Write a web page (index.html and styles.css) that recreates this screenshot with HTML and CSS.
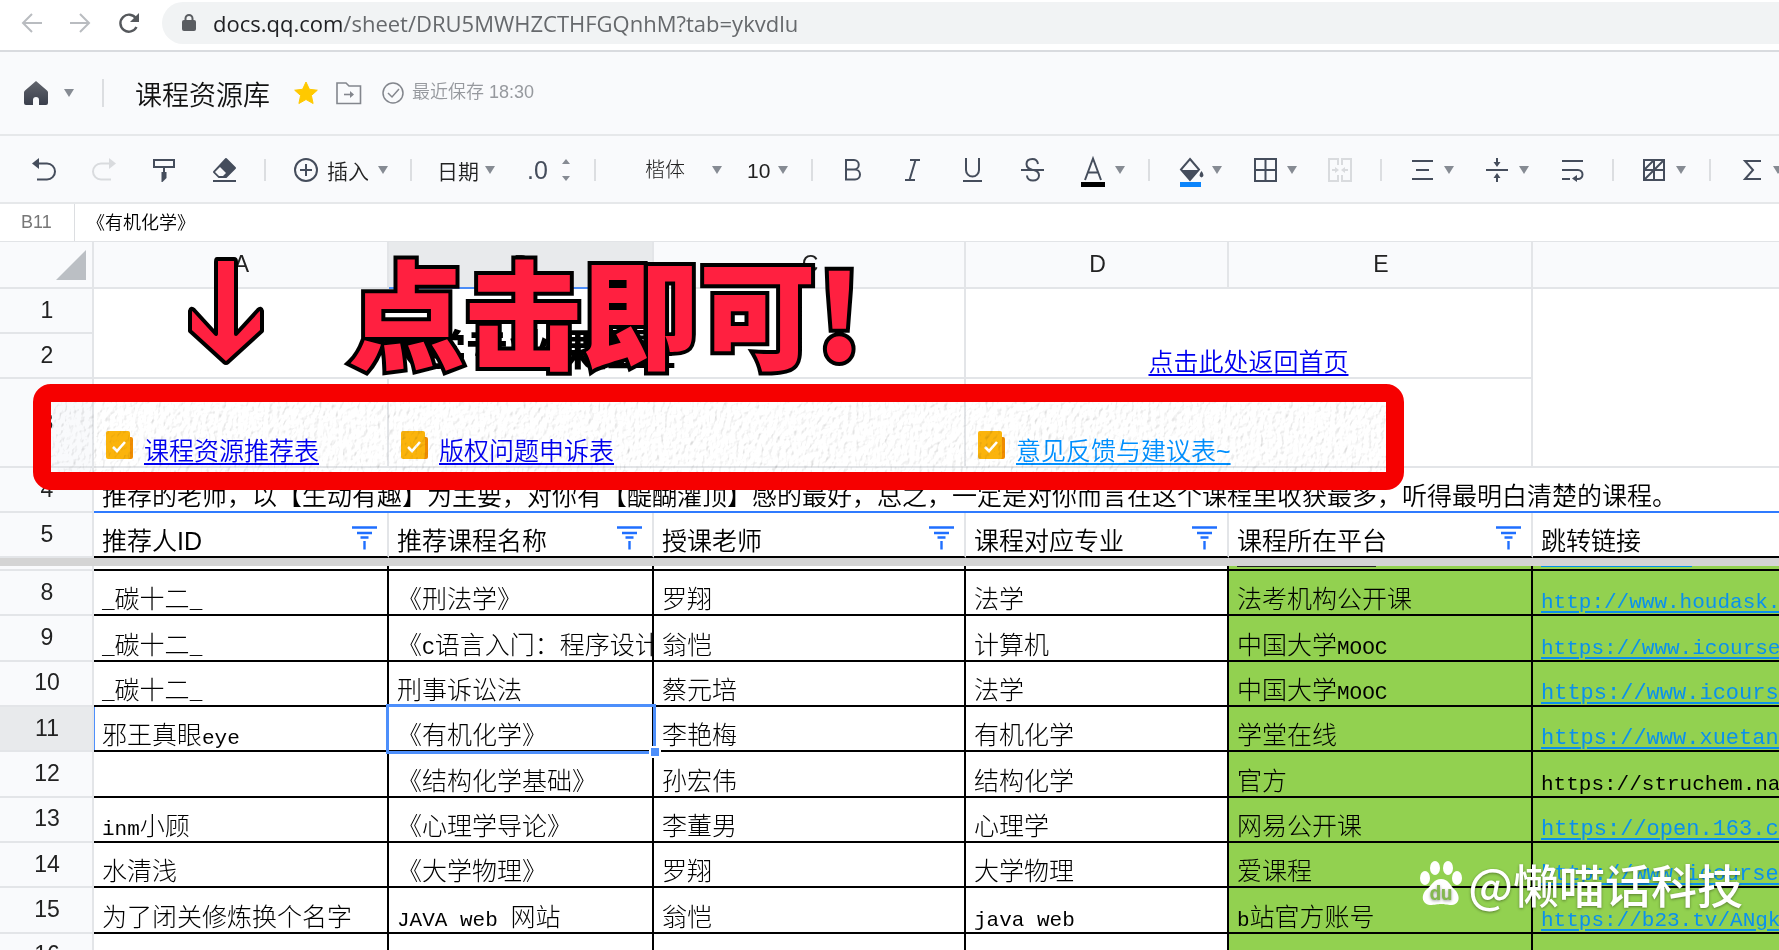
FILE: index.html
```html
<!DOCTYPE html>
<html lang="zh-CN">
<head>
<meta charset="utf-8">
<title>课程资源库</title>
<link rel="stylesheet" href="styles.css">
</head>
<body>
<svg class="defs" aria-hidden="true">
  <symbol id="caret" viewBox="0 0 10 8"><path d="M0 0h10L5 8z" fill="#868b93"/></symbol>
  <symbol id="filter" viewBox="0 0 26 24"><path d="M0 1.500h25M5 7h15M8.500 11.500h8M12.500 15v8.500" fill="none" stroke="#1f6fff" stroke-width="2.400"/></symbol>
  <symbol id="form" viewBox="0 0 27 29"><rect x="14" y="6" width="13" height="22" rx="2" fill="#f08c00"/><rect width="24" height="28" rx="2" fill="#fbb40c"/><path d="M7 16l4 4 8-9" fill="none" stroke="#fff" stroke-width="2.600"/></symbol>
</svg>

<header class="browser">
  <button class="nav" aria-label="后退"><svg width="20" height="20" viewBox="0 0 20 20"><path d="M20 10H2M10 1l-9 9 9 9" fill="none" stroke="#b9bcc0" stroke-width="2"/></svg></button>
  <button class="nav" aria-label="前进"><svg width="20" height="20" viewBox="0 0 20 20"><path d="M0 10h18M10 1l9 9-9 9" fill="none" stroke="#b9bcc0" stroke-width="2"/></svg></button>
  <button class="nav" aria-label="刷新"><svg width="22" height="20" viewBox="0 0 22 20"><path d="M18 5.500A8.500 8.500 0 1 0 18.500 14" fill="none" stroke="#55585c" stroke-width="2.400"/><path d="M21 0v9h-9z" fill="#55585c"/></svg></button>
  <div class="address">
    <svg width="14" height="18" viewBox="0 0 14 18"><rect y="6" width="14" height="11" rx="2" fill="#5a5d61"/><path d="M3.500 7V4.500a3.500 3.500 0 0 1 7 0V7" fill="none" stroke="#5a5d61" stroke-width="2"/></svg>
    <span class="url"><span class="host">docs.qq.com</span>/sheet/DRU5MWHZCTHFGQnhM?tab=ykvdlu</span>
  </div>
</header>

<div class="titlebar">
  <button class="home" aria-label="首页"><svg width="24" height="26" viewBox="0 0 24 26"><defs><linearGradient id="hg" x2="0" y2="1"><stop stop-color="#62656d"/><stop offset="1" stop-color="#3a3f4c"/></linearGradient></defs><path d="M12 1l11 9.500q1 1 1 2V23q0 2-2 2h-7v-5a3 3 0 0 0-6 0v5H2q-2 0-2-2V12.500q0-1 1-2z" fill="url(#hg)"/></svg><svg class="caret"><use href="#caret"/></svg></button>
  <i class="sep tall"></i>
  <h1>课程资源库</h1>
  <button aria-label="收藏"><svg width="24" height="24" viewBox="0 0 24 24"><path d="M12 1l3.400 7.300 7.900.9-5.900 5.300 1.700 8L12 18.500l-7.100 4 1.700-8L.7 9.200l7.900-.9z" fill="#ffc900" stroke="#ffc900" stroke-linejoin="round"/></svg></button>
  <button class="folder" aria-label="移动"><svg width="26" height="24" viewBox="0 0 26 24" fill="none" stroke="#83868d" stroke-width="1.600"><path d="M1 2h9l3 3h11.500v17.500H1z"/><path d="M8 13.500h8"/><path d="M14 10l4 3.500-4 3.500z" fill="#83868d" stroke="none"/></svg></button>
  <div class="saved"><svg width="22" height="22" viewBox="0 0 22 22" fill="none" stroke="#83868d" stroke-width="1.500"><circle cx="11" cy="11" r="10"/><path d="M6 11l4 4 7-8"/></svg><span>最近保存 18:30</span></div>
</div>

<div class="toolbar">
  <button class="tool" aria-label="撤销"><svg width="24" height="24" viewBox="0 0 24 24" fill="none" stroke="#454d5c" stroke-width="2"><path d="M5 5.500h10a8 8 0 0 1 0 16H5"/><path d="M7 0v11L0 5.500z" fill="#454d5c" stroke="none"/></svg></button>
  <button class="tool" aria-label="重做"><svg width="24" height="24" viewBox="0 0 24 24" fill="none" stroke="#d9dbde" stroke-width="2"><path d="M19 5.500H9a8 8 0 0 0 0 16h10"/><path d="M17 0v11l7-5.500z" fill="#d9dbde" stroke="none"/></svg></button>
  <button class="tool" aria-label="格式刷"><svg width="24" height="24" viewBox="0 0 24 24" fill="none" stroke="#454d5c" stroke-width="2"><path d="M2 2h20v7H2zM12 9v6"/><path d="M9.500 14h5v6l-4 4h-1z" fill="#454d5c" stroke="none"/></svg></button>
  <button class="tool" aria-label="清除格式"><svg width="24" height="24" viewBox="0 0 24 24" fill="none" stroke="#454d5c" stroke-width="2"><path d="M14 1l9 9-9 9H7l-5-5z" fill="#454d5c" stroke-linejoin="round"/><path d="M8 9l6 6-3 3H7l-4-4z" fill="#f9fafc" stroke="none"/><path d="M1 23h23"/></svg></button>
  <i class="sep"></i>
  <button class="insert"><svg width="24" height="24" viewBox="0 0 24 24" fill="none" stroke="#454d5c" stroke-width="2"><circle cx="12" cy="12" r="11"/><path d="M12 6v12M6 12h12"/></svg><span>插入</span><svg class="caret"><use href="#caret"/></svg></button>
  <i class="sep"></i>
  <button class="date"><span>日期</span><svg class="caret"><use href="#caret"/></svg></button>
  <button class="decimal"><span>.0</span><svg width="8" height="22" viewBox="0 0 8 22" fill="#868b93"><path d="M4 0l4 5H0zM4 22l4-5H0z"/></svg></button>
  <i class="sep"></i>
  <label class="drop face"><select aria-label="字体"><option>楷体</option></select><svg class="caret"><use href="#caret"/></svg></label>
  <label class="drop size"><select aria-label="字号"><option>10</option></select><svg class="caret"><use href="#caret"/></svg></label>
  <i class="sep"></i>
  <button class="tool" aria-label="加粗"><svg width="24" height="24" viewBox="0 0 24 24" fill="none" stroke="#454d5c" stroke-width="2"><path d="M5 2h8a4.500 4.500 0 0 1 0 9.500H5zM5 11.500h9a5 5 0 0 1 0 10H5z"/></svg></button>
  <button class="tool" aria-label="斜体"><svg width="24" height="24" viewBox="0 0 24 24" fill="none" stroke="#454d5c" stroke-width="2"><path d="M9 2h10M4 22h10M14.500 2l-6 20"/></svg></button>
  <button class="tool" aria-label="下划线"><svg width="24" height="24" viewBox="0 0 24 24" fill="none" stroke="#454d5c" stroke-width="2"><path d="M5 0v12a6.500 6.500 0 0 0 13 0V0M2 23h19"/></svg></button>
  <button class="tool" aria-label="删除线"><svg width="24" height="24" viewBox="0 0 24 24" fill="none" stroke="#454d5c" stroke-width="2"><path d="M17 6c-.5-3-2.500-5-5.500-5-4 0-6 2-6 5 0 4 3 5 6 6M13 12c3 1 5 3 5 5.500 0 3-2.500 5-6 5s-6-2-6-5M0 12h23"/></svg></button>
  <button class="tool drop-tool" aria-label="文字颜色"><svg width="24" height="34" viewBox="0 0 24 34" fill="none" stroke="#454d5c" stroke-width="2"><path d="M4 27L12 5.500 20 27M7 19.500h10"/><path d="M0 31.500h24" stroke="#000" stroke-width="5"/></svg><svg class="caret"><use href="#caret"/></svg></button>
  <i class="sep"></i>
  <button class="tool drop-tool" aria-label="填充颜色"><svg width="24" height="34" viewBox="0 0 24 34" fill="none" stroke="#454d5c" stroke-width="2"><path d="M12 6l9 10.500L12 27 3 16.500z"/><path d="M3 17h18l-9 10z" fill="#454d5c" stroke="none"/><path d="M23.500 18q4 5 0 6.500-4-1.500 0-6.500z" fill="#454d5c" stroke="none"/><path d="M2 31.500h21" stroke="#0b84fb" stroke-width="5"/></svg><svg class="caret"><use href="#caret"/></svg></button>
  <button class="tool drop-tool" aria-label="边框"><svg width="24" height="24" viewBox="0 0 24 24" fill="none" stroke="#454d5c" stroke-width="2"><path d="M2 1h21v22H2zM12.500 1v22M2 12h21"/></svg><svg class="caret"><use href="#caret"/></svg></button>
  <button class="tool" aria-label="合并单元格"><svg width="24" height="24" viewBox="0 0 24 24" fill="none" stroke="#d9dbde" stroke-width="2"><path d="M10 7V1H1v22h9v-6M14 7V1h9v22h-9v-6M4 12h5M20 12h-5"/><path d="M7 9l4 3-4 3zM17 9l-4 3 4 3z" fill="#d9dbde" stroke="none"/></svg></button>
  <i class="sep"></i>
  <button class="tool drop-tool" aria-label="水平对齐"><svg width="24" height="24" viewBox="0 0 24 24" fill="none" stroke="#454d5c" stroke-width="2"><path d="M2 3h21M6 12h13M2 21h21"/></svg><svg class="caret"><use href="#caret"/></svg></button>
  <button class="tool drop-tool" aria-label="垂直对齐"><svg width="24" height="24" viewBox="0 0 24 24" fill="none" stroke="#454d5c" stroke-width="2"><path d="M1 12h22M12 0v5M12 19v5"/><path d="M8.500 4h7L12 9zM8.500 20h7L12 15z" fill="#454d5c" stroke="none"/></svg><svg class="caret"><use href="#caret"/></svg></button>
  <button class="tool" aria-label="自动换行"><svg width="24" height="24" viewBox="0 0 24 24" fill="none" stroke="#454d5c" stroke-width="2"><path d="M2 3h21M2 12h16a4.500 4.500 0 0 1 0 9h-3M2 21h8"/><path d="M17 17v7l-5-3.500z" fill="#454d5c" stroke="none"/></svg></button>
  <i class="sep"></i>
  <button class="tool drop-tool" aria-label="表格样式"><svg width="24" height="24" viewBox="0 0 24 24" fill="none" stroke="#454d5c" stroke-width="2"><path d="M2 2h20v20H2zM12 2v20M2 12h20M2 12L12 2M2 22L22 2"/></svg><svg class="caret"><use href="#caret"/></svg></button>
  <i class="sep"></i>
  <button class="tool drop-tool" aria-label="求和"><svg width="24" height="24" viewBox="0 0 24 24" fill="none" stroke="#454d5c" stroke-width="2"><path d="M22 3H6l8 9-8 9h16"/></svg><svg class="caret"><use href="#caret"/></svg></button>
</div>

<div class="formula"><span class="ref">B11</span><input aria-label="单元格内容" value="《有机化学》"></div>

<main class="sheet">
  <table class="frozen">
    <colgroup><col class="n"><col class="a"><col class="b"><col class="c"><col class="d"><col class="e"><col></colgroup>
    <thead>
      <tr><th class="corner"><svg width="30" height="30" viewBox="0 0 30 30"><path d="M30 0v30H0z" fill="#bbbfc4"/></svg></th><th>A</th><th class="active">B</th><th>C</th><th>D</th><th>E</th><th></th></tr>
    </thead>
    <tbody>
      <tr><th>1</th><td class="headline" colspan="3" rowspan="2">大学专业课程整</td><td class="back" colspan="2" rowspan="2"><a href="#">点击此处返回首页</a></td><td rowspan="3"></td></tr>
      <tr><th>2</th></tr>
      <tr class="links"><th>3</th>
        <td><div class="form-link"><svg width="27" height="29"><use href="#form"/></svg><a href="#">课程资源推荐表</a></div></td>
        <td colspan="2"><div class="form-link"><svg width="27" height="29"><use href="#form"/></svg><a href="#">版权问题申诉表</a></div></td>
        <td class="open" colspan="2"><div class="form-link"><svg width="27" height="29"><use href="#form"/></svg><a class="light" href="#">意见反馈与建议表~</a></div></td></tr>
      <tr class="note"><th>4</th><td colspan="6">推荐的老师，以【生动有趣】为主要，对你有【醍醐灌顶】感的最好，总之，一定是对你而言在这个课程里收获最多，听得最明白清楚的课程。</td></tr>
      <tr class="fields"><th>5</th>
        <td><div class="field">推荐人ID<button aria-label="筛选"><svg width="26" height="24"><use href="#filter"/></svg></button></div></td>
        <td><div class="field">推荐课程名称<button aria-label="筛选"><svg width="26" height="24"><use href="#filter"/></svg></button></div></td>
        <td><div class="field">授课老师<button aria-label="筛选"><svg width="26" height="24"><use href="#filter"/></svg></button></div></td>
        <td><div class="field">课程对应专业<button aria-label="筛选"><svg width="26" height="24"><use href="#filter"/></svg></button></div></td>
        <td><div class="field">课程所在平台<button aria-label="筛选"><svg width="26" height="24"><use href="#filter"/></svg></button></div></td>
        <td>跳转链接</td></tr>
    </tbody>
  </table>
  <div class="freeze"></div>
  <table class="rows">
    <colgroup><col class="n"><col class="a"><col class="b"><col class="c"><col class="d"><col class="e"><col></colgroup>
    <tbody>
      <tr class="sliver"><th></th><td></td><td></td><td></td><td></td><td class="g"><i></i></td><td class="g"><i class="blue"></i></td></tr>
      <tr><th>8</th><td><span>_</span>碳十二<span>_</span></td><td>《刑法学》</td><td>罗翔</td><td>法学</td><td class="g">法考机构公开课</td><td class="g"><a href="#">http://www.houdask.com</a></td></tr>
      <tr><th>9</th><td><span>_</span>碳十二<span>_</span></td><td>《<span>C</span>语言入门：程序设计》</td><td>翁恺</td><td>计算机</td><td class="g">中国大学<span>MOOC</span></td><td class="g"><a href="#">https://www.icourse163.org</a></td></tr>
      <tr><th>10</th><td><span>_</span>碳十二<span>_</span></td><td>刑事诉讼法</td><td>蔡元培</td><td>法学</td><td class="g">中国大学<span>MOOC</span></td><td class="g"><a class="thin" href="#">https://www.icourse163.org</a></td></tr>
      <tr class="current"><th>11</th><td>邪王真眼<span>eye</span></td><td class="selected">《有机化学》</td><td>李艳梅</td><td>有机化学</td><td class="g">学堂在线</td><td class="g"><a class="thin" href="#">https://www.xuetangx.com</a></td></tr>
      <tr><th>12</th><td></td><td>《结构化学基础》</td><td>孙宏伟</td><td>结构化学</td><td class="g">官方</td><td class="g"><span>https://struchem.nankai</span></td></tr>
      <tr><th>13</th><td><span>inm</span>小顾</td><td>《心理学导论》</td><td>李董男</td><td>心理学</td><td class="g">网易公开课</td><td class="g"><a class="thin" href="#">https://open.163.com</a></td></tr>
      <tr><th>14</th><td>水清浅</td><td>《大学物理》</td><td>罗翔</td><td>大学物理</td><td class="g">爱课程</td><td class="g"><a class="thin" href="#">http://www.icourses.cn</a></td></tr>
      <tr><th>15</th><td>为了闭关修炼换个名字</td><td><span>JAVA web </span>网站</td><td>翁恺</td><td><span>java web</span></td><td class="g"><span>b</span>站官方账号</td><td class="g"><a href="#">https://b23.tv/ANgkxx</a></td></tr>
      <tr class="last"><th>16</th><td></td><td></td><td></td><td></td><td class="g"></td><td class="g"></td></tr>
    </tbody>
  </table>
</main>

<svg class="arrow" width="76" height="110" viewBox="0 0 76 110"><path d="M29 3h17q2 0 2 3v72l22-24q3-3 4 1v20L40 106q-2 2-4 0L2 75V55q1-4 4-1l22 24V6q0-3 1-3z" fill="#ff2040" stroke="#000" stroke-width="4" stroke-linejoin="round"/></svg>
<div class="callout">点击即可!</div>
<div class="paper">
  <svg width="100%" height="100%"><filter id="grain" x="0" y="0" width="100%" height="100%"><feTurbulence type="fractalNoise" baseFrequency=".24 .16" numOctaves="3" seed="4"/><feDiffuseLighting surfaceScale="1" diffuseConstant="1.180" lighting-color="#fff"><feDistantLight azimuth="225" elevation="60"/></feDiffuseLighting></filter><rect width="100%" height="100%" filter="url(#grain)"/></svg>
</div>
<div class="frame"></div>
<div class="watermark">
  <svg width="44" height="46" viewBox="0 0 44 46"><g fill="#fff"><ellipse cx="16" cy="8" rx="5" ry="7"/><ellipse cx="29" cy="8" rx="5" ry="7"/><ellipse cx="6" cy="18" rx="5" ry="7"/><ellipse cx="38" cy="18" rx="5" ry="7"/><path d="M22 19c7 0 9 6 13 10 6 5 7 15-2 16-6 0-7-1-11-1s-6 1-11 1c-9-1-9-11-3-16 5-4 7-10 14-10z"/></g><text x="22" y="40" text-anchor="middle" class="du">du</text></svg>
  <span>@懒喵话科技</span>
</div>
</body>
</html>
```
FILE: styles.css
```css
*, *::before, *::after { box-sizing: border-box; }
body {
  margin: 0;
  height: 100vh;
  overflow: hidden;
  position: relative;
  display: flex;
  flex-direction: column;
  background: #fff;
  color: #000;
  font-family: "Liberation Sans", "Noto Sans CJK SC", sans-serif;
  font-weight: 350;
}
.defs { position: absolute; width: 0; height: 0; }
button {
  display: flex;
  align-items: center;
  padding: 0;
  border: 0;
  background: none;
  font: inherit;
  color: inherit;
}
svg { display: block; flex: none; overflow: visible; }
.caret { width: 10px; height: 8px; }

.browser {
  flex: none;
  display: flex;
  height: 52px;
  padding: 2px 0 6px 22px;
  border-bottom: 2px solid #d9dbdf;
}
.nav { width: 48px; }
.address {
  flex: 1;
  display: flex;
  align-items: center;
  gap: 17px;
  padding: 0 20px;
  margin-left: -4px;
  border-radius: 21px 0 0 21px;
  background: #f1f3f4;
}
.url { font: 400 22px/40px "Open Sans", "Noto Sans", sans-serif; color: #66696c; }
.host { color: #202124; }

.titlebar {
  flex: none;
  display: flex;
  align-items: center;
  height: 84px;
  padding-left: 24px;
  border-bottom: 2px solid #e6e8ea;
  background: #f9fafc;
}
.home { gap: 16px; margin-right: 18px; }
.titlebar h1 {
  margin: 0 24px 0 21px;
  font-size: 27px;
  font-weight: 350;
  color: #111;
}
.folder { margin: 0 20px 0 18px; }
.saved { display: flex; align-items: center; gap: 8px; font-size: 18px; line-height: 22px; color: #96999e; }
.saved span { padding-bottom: 2px; }

.sep { flex: none; width: 22px; height: 22px; background: linear-gradient(#dcdee1, #dcdee1) center / 2px 100% no-repeat; }
.sep.tall { height: 28px; }

.toolbar {
  flex: none;
  display: flex;
  align-items: center;
  height: 68px;
  padding: 2px 0 0 14px;
  overflow: hidden;
  border-bottom: 2px solid #e6e8ea;
  background: #f9fafc;
  font-size: 21px;
  color: #222;
}
.tool { flex: none; width: 60px; height: 60px; padding-left: 18px; gap: 10px; }
.drop-tool { width: 75px; }
.insert { flex: none; width: 124px; padding-left: 18px; gap: 9px; }
.date { flex: none; width: 84px; padding-left: 15px; gap: 6px; }
.decimal { flex: none; width: 78px; padding-left: 21px; gap: 14px; font-size: 25px; color: #454d5c; }
.drop { flex: none; display: flex; align-items: center; }
.drop select {
  appearance: none;
  border: 0;
  padding: 0;
  background: none;
  font: inherit;
  color: inherit;
}
.face { width: 126px; padding-left: 39px; font-size: 20px; font-weight: 300; }
.face select { width: 67px; }
.size { width: 69px; padding-left: 15px; font-size: 21px; }
.size select { width: 31px; }

.formula {
  flex: none;
  display: flex;
  align-items: stretch;
  height: 38px;
  border-bottom: 1px solid #e2e4e7;
}
.ref { width: 75px; padding-left: 21px; border-right: 1px solid #dcdee1; font-size: 18px; line-height: 36px; color: #777; }
.formula input { flex: 1; border: 0; padding: 0 12px 4px; font: inherit; font-size: 18px; }

.sheet { flex: 1; overflow: hidden; }
table { width: 100%; table-layout: fixed; border-collapse: separate; border-spacing: 0; font-size: 25px; line-height: 30px; }
.n { width: 94px; }
.a { width: 295px; }
.b { width: 265px; }
.c { width: 312px; }
.d { width: 263px; }
.e { width: 304px; }
th {
  padding: 0 0 0 2px;
  border: 0 solid #e3e5e8;
  border-width: 0 2px 2px 0;
  background: #f9fafc;
  font-size: 23px;
  line-height: 28px;
  font-weight: 400;
  color: #222;
}
tbody th { padding-bottom: 2px; }
td {
  padding: 0 8px;
  border: 0 solid #e3e5e8;
  border-width: 0 2px 2px 0;
  vertical-align: bottom;
  white-space: nowrap;
  overflow: hidden;
}
td:last-child, th:last-child:not(:first-child) { border-right: 0; }
td.open { border-right: 2px solid #e3e5e8; }
a { color: #0000f0; text-decoration-thickness: 2px; text-underline-offset: 3px; }
a.light { color: #0090ff; }

.frozen tr { height: 45px; }
.frozen thead tr { height: 47px; }
.frozen thead th { padding-bottom: 2px; }
.corner svg { margin: 4px 6px 2px auto; }
th.active { background: #e8eaec; border-bottom-color: #4a8cf7; }
.frozen .links { height: 89px; }
.headline { font-size: 42px; line-height: 52px; font-weight: 900; text-align: center; }
.back { text-align: center; }
.form-link { display: flex; gap: 11px; padding-left: 4px; }
.form-link svg { margin-top: -5px; }
.note td { border-bottom-color: #2f7bff; }
.fields td { border-bottom-color: #000; }
.field { display: flex; justify-content: space-between; }
.field button { align-items: flex-start; padding-right: 1px; }
.freeze { height: 8px; background: #d4d4d4; }

.rows { height: 413px; font-weight: 300; }
.rows td { border-color: #000; }
.rows span, .rows a { font-family: "Liberation Mono", monospace; font-size: 21px; line-height: 20px; }
.rows .sliver { height: 5px; line-height: 0; }
.sliver th, .sliver td { height: 5px; padding-bottom: 0; font-size: 0; line-height: 0; vertical-align: top; }
.sliver i { display: block; width: 139px; height: 1px; background: #222; }
.sliver i.blue { width: 151px; background: #0090e8; }
.rows a { color: #0a90ee; }
.rows a.thin { font-size: 22px; }
.rows .g { background: #92d150; }
.current th { background: #e8eaec; }
.current td:nth-child(2) { box-shadow: inset 1px 0 #4d8ffb; }
.rows .selected { position: relative; overflow: visible; }
.selected::before {
  content: "";
  position: absolute;
  inset: -3px -4px -4px -3px;
  border: 3px solid #4d8ffb;
}
.selected::after {
  content: "";
  position: absolute;
  right: -9px;
  bottom: -8px;
  width: 12px;
  height: 12px;
  border: 2px solid #fff;
  background: #4d8ffb;
}

.arrow { position: absolute; left: 188px; top: 256px; }
.callout {
  position: absolute;
  left: 348px;
  top: 224px;
  font-size: 117px;
  line-height: 170px;
  font-family: "Noto Sans CJK SC", sans-serif;
  font-weight: 900;
  color: #ff2040;
  -webkit-text-stroke: 8px #000;
  paint-order: stroke fill;
}
.frame, .paper {
  position: absolute;
  left: 33px;
  top: 384px;
  width: 1371px;
  height: 106px;
}
.frame { border: 18px solid #f60000; border-radius: 18px; }
.paper { padding: 17px; mix-blend-mode: multiply; }
.watermark {
  position: absolute;
  right: 36px;
  bottom: 34px;
  display: flex;
  align-items: center;
  gap: 5px;
  font-family: "Noto Sans CJK SC", sans-serif;
  font-size: 46px;
  line-height: 66px;
  font-weight: 500;
  color: #fff;
  text-shadow: 0 1px 3px #0006;
}
.du { font: 700 20px Roboto, sans-serif; fill: #84b850; }
```
